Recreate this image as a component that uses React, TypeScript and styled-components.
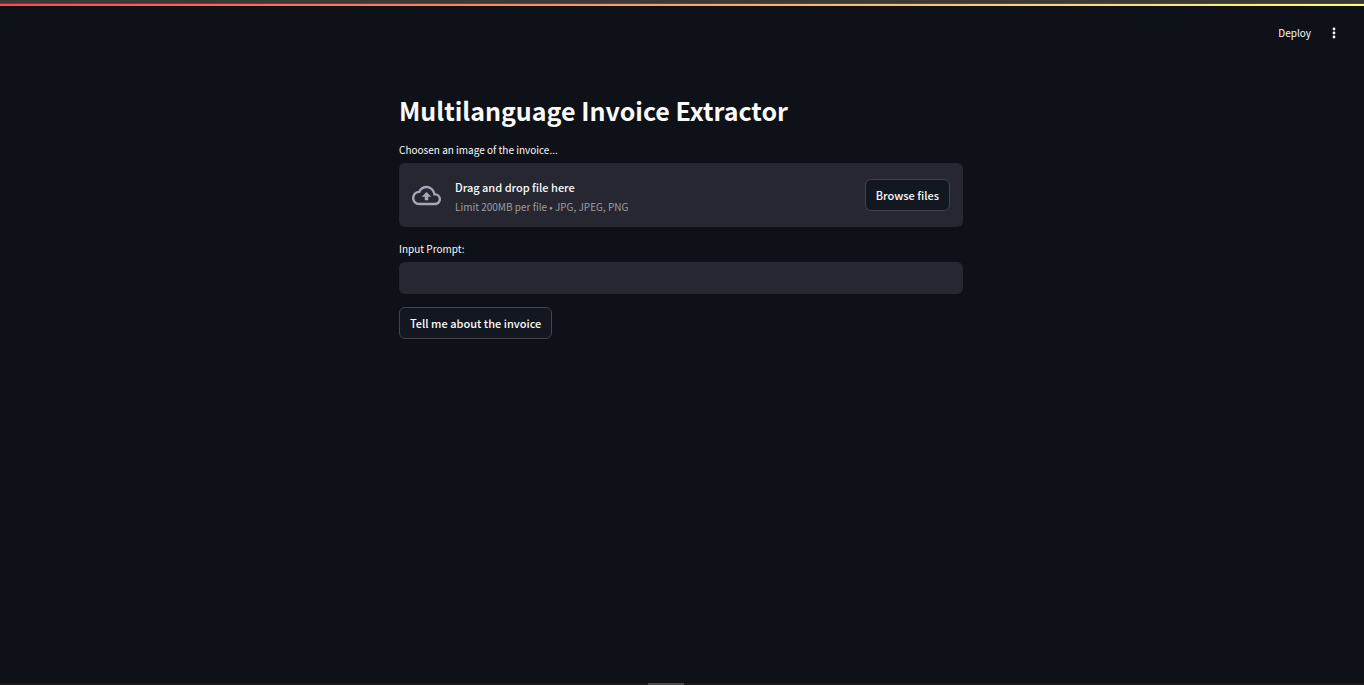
import React from "react";
import styled, { createGlobalStyle } from "styled-components";

const GlobalStyle = createGlobalStyle`
  *, *::before, *::after { box-sizing: border-box; }
  body {
    margin: 0;
    background: #0e1117;
    color: #fafafa;
    font-family: "Source Sans Pro", "Noto Sans CJK JP", "Noto Sans", sans-serif;
    font-size: 11px;
    font-weight: 500;
    line-height: 20px;
  }
  button, input { font: inherit; color: inherit; }
`;

const Page = styled.div`
  min-height: 100vh;
  display: flex;
  flex-direction: column;
`;

const WindowEdge = styled.div`
  height: 4px;
  background: #393939;
  border-bottom: 1px solid #4a4a4a;
`;

const Decoration = styled.div`
  height: 2px;
  background: linear-gradient(90deg, #ff4b4b, #fffd80);
`;

const Toolbar = styled.header`
  display: flex;
  justify-content: flex-end;
  align-items: center;
  gap: 8px;
  padding: 17px 20px 0 0;
`;

const ToolbarButton = styled.button`
  display: flex;
  align-items: center;
  height: 20px;
  padding: 0 5px;
  border: 0;
  background: none;
  font-size: 10px;
  font-weight: 400;
  cursor: pointer;
`;

const Main = styled.main`
  width: 100%;
  max-width: 564px;
  margin: 0 auto;
  padding: 48px 0;
  position: relative;
  right: 1px;
  flex: 1;
`;

const Title = styled.h1`
  margin: 0;
  padding: 2px 0 14px;
  font-size: 25px;
  font-weight: 700;
  line-height: 34px;
`;

const Field = styled.div`
  margin-bottom: 13px;
`;

const Label = styled.label`
  display: block;
  height: 22px;
  font-size: 10px;
  font-weight: 400;
  line-height: 18px;
`;

const Dropzone = styled.section`
  display: flex;
  align-items: center;
  min-height: 64px;
  padding: 10px 13px;
  border-radius: 6px;
  background: #262730;
`;

const CloudIcon = styled.svg`
  width: 29px;
  height: 29px;
  margin-right: 14px;
  fill: #a3a8b8;
`;

const Instructions = styled.div`
  flex: 1;
  padding-top: 3px;
`;

const Hint = styled.div`
  color: #9c9da2;
  font-size: 10px;
  font-weight: 400;
`;

const HiddenFile = styled.input`
  display: none;
`;

const Button = styled.button`
  height: 32px;
  padding: 0 10px;
  border: 1px solid #41444c;
  border-radius: 6px;
  background: #131720;
  line-height: 20px;
  cursor: pointer;
`;

const TextInput = styled.input`
  display: block;
  width: 100%;
  height: 32px;
  padding: 0 10px;
  border: 0;
  border-radius: 6px;
  background: #262730;
`;

const BottomEdge = styled.footer`
  display: flex;
  justify-content: center;
  height: 2px;
  padding-right: 32px;
  background: #1b1b1d;
`;

const Handle = styled.div`
  width: 36px;
  background: #4b4b4d;
`;

export default function App() {
  const fileRef = React.useRef<HTMLInputElement>(null);
  return (
    <Page>
      <GlobalStyle />
      <WindowEdge />
      <Decoration />
      <Toolbar>
        <ToolbarButton>Deploy</ToolbarButton>
        <ToolbarButton aria-label="Main menu">
          <svg width="10" height="12" viewBox="0 0 10 12" fill="#fafafa">
            <circle cx="5" cy="2" r="1.4" />
            <circle cx="5" cy="6" r="1.4" />
            <circle cx="5" cy="10" r="1.4" />
          </svg>
        </ToolbarButton>
      </Toolbar>
      <Main>
        <Title>Multilanguage Invoice Extractor</Title>
        <Field>
          <Label htmlFor="invoice">Choosen an image of the invoice...</Label>
          <Dropzone>
            <CloudIcon viewBox="0 0 24 24">
              <path d="M19.35 10.04A7.49 7.49 0 0 0 12 4C9.11 4 6.6 5.64 5.35 8.04A5.994 5.994 0 0 0 0 14c0 3.31 2.69 6 6 6h13c2.76 0 5-2.24 5-5 0-2.64-2.05-4.78-4.65-4.96zM19 18H6c-2.21 0-4-1.79-4-4 0-2.05 1.53-3.76 3.56-3.97l1.07-.11.5-.95A5.469 5.469 0 0 1 12 6c2.62 0 4.88 1.86 5.39 4.43l.3 1.5 1.53.11A2.98 2.98 0 0 1 22 15c0 1.65-1.35 3-3 3zM8 13h2.55v3h2.9v-3H16l-4-4z" />
            </CloudIcon>
            <Instructions>
              <div>Drag and drop file here</div>
              <Hint>Limit 200MB per file • JPG, JPEG, PNG</Hint>
            </Instructions>
            <HiddenFile id="invoice" type="file" accept=".jpg,.jpeg,.png" ref={fileRef} />
            <Button onClick={() => fileRef.current?.click()}>Browse files</Button>
          </Dropzone>
        </Field>
        <Field>
          <Label htmlFor="prompt">Input Prompt:</Label>
          <TextInput id="prompt" type="text" />
        </Field>
        <Button>Tell me about the invoice</Button>
      </Main>
      <BottomEdge>
        <Handle />
      </BottomEdge>
    </Page>
  );
}
